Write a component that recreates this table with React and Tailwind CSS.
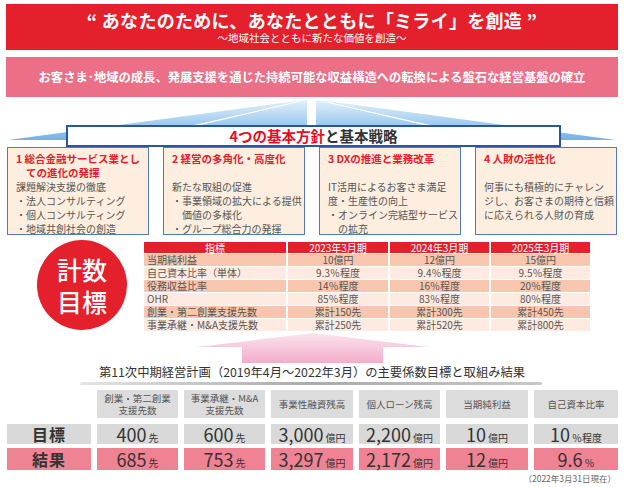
import React from "react";

const FONT = { fontFamily: '"Noto Sans CJK JP", "Noto Sans", sans-serif' };

const POLICIES = [
    {
        title: ["1 総合金融サービス業とし", "ての進化の発揮"],
        body: [
            { t: "課題解決支援の徹底" },
            { t: "・法人コンサルティング" },
            { t: "・個人コンサルティング" },
            { t: "・地域共創社会の創造" },
        ],
    },
    {
        title: ["2 経営の多角化・高度化", ""],
        body: [
            { t: "新たな取組の促進" },
            { t: "・事業領域の拡大による提供" },
            { t: "価値の多様化", indent: true },
            { t: "・グループ総合力の発揮" },
        ],
    },
    {
        title: ["3 DXの推進と業務改革", ""],
        body: [
            { t: "IT活用によるお客さま満足" },
            { t: "度・生産性の向上" },
            { t: "・オンライン完結型サービス" },
            { t: "の拡充", indent: true },
        ],
    },
    {
        title: ["4 人財の活性化", ""],
        body: [
            { t: "何事にも積極的にチャレン" },
            { t: "ジし、お客さまの期待と信頼" },
            { t: "に応えられる人財の育成" },
        ],
    },
];

const TARGETS = [
    ["当期純利益", "10億円", "12億円", "15億円"],
    ["自己資本比率（単体）", "9.3％程度", "9.4％程度", "9.5％程度"],
    ["役務収益比率", "14％程度", "16％程度", "20％程度"],
    ["OHR", "85％程度", "83％程度", "80％程度"],
    ["創業・第二創業支援先数", "累計150先", "累計300先", "累計450先"],
    ["事業承継・M&A支援先数", "累計250先", "累計520先", "累計800先"],
];

const RESULT_HEADERS = [
    ["創業・第二創業", "支援先数"],
    ["事業承継・M&A", "支援先数"],
    ["事業性融資残高"],
    ["個人ローン残高"],
    ["当期純利益"],
    ["自己資本比率"],
];

const GOALS = [
    ["400", "先"],
    ["600", "先"],
    ["3,000", "億円"],
    ["2,200", "億円"],
    ["10", "億円"],
    ["10", "％程度"],
];

const RESULTS = [
    ["685", "先"],
    ["753", "先"],
    ["3,297", "億円"],
    ["2,172", "億円"],
    ["12", "億円"],
    ["9.6", "％"],
];

function Fan() {
    return (
        <svg className="absolute left-0 top-0" width="624" height="50" viewBox="0 0 624 50">
            <defs>
                <linearGradient id="fan" x1="0" y1="3" x2="0" y2="44" gradientUnits="userSpaceOnUse">
                    <stop offset="0" stopColor="#e4f1fb" />
                    <stop offset="1" stopColor="#6fb0e6" />
                </linearGradient>
            </defs>
            <polygon points="304,3 8,43 128,43" fill="url(#fan)" />
            <polygon points="307,3 137,43 307,43" fill="url(#fan)" />
            <polygon points="316,3 316,43 488,43" fill="url(#fan)" />
            <polygon points="319,3 497,43 616,43" fill="url(#fan)" />
        </svg>
    );
}

function Arrow() {
    return (
        <svg className="ml-[197px] block" width="232" height="30" viewBox="0 0 232 30">
            <defs>
                <linearGradient id="arw" x1="0" y1="0" x2="0" y2="30" gradientUnits="userSpaceOnUse">
                    <stop offset="0" stopColor="#fbe4ee" />
                    <stop offset="1" stopColor="#f3adc9" />
                </linearGradient>
            </defs>
            <polygon points="116,0 231,14 186,14 186,30 45,30 45,14 0,14" fill="url(#arw)" />
        </svg>
    );
}

function Value({ n, u }) {
    return (
        <span className="text-[#333]">
            <span className="text-[18px]">{n}</span>
            <span className="text-[10px] ml-[2px]">{u}</span>
        </span>
    );
}

export default function App() {
    return (
        <div className="w-[624px] h-[487px] bg-white overflow-hidden relative" style={FONT}>
            {/* Vision banner */}
            <div className="mx-[6px] mt-[4px] h-[46px] bg-[#e3202c] flex flex-col items-center justify-center text-white">
                <p className="text-[18px] font-bold leading-[22px] tracking-[0.3px]">
                    “ あなたのために、あなたとともに「ミライ」を創造 ”
                </p>
                <p className="text-[10.5px] leading-[14px]">～地域社会とともに新たな価値を創造～</p>
            </div>

            {/* Goal banner */}
            <div className="mx-[6px] mt-[7px] h-[40px] bg-[#ea6f87] flex items-center justify-center">
                <p className="text-white text-[12.3px] font-bold whitespace-nowrap">
                    お客さま･地域の成長、発展支援を通じた持続可能な収益構造への転換による盤石な経営基盤の確立
                </p>
            </div>

            {/* Fan + heading */}
            <div className="relative h-[50px] pt-[28px]">
                <Fan />
                <div className="relative ml-[66px] w-[495px] h-[22px] border-2 border-[#2a55a3] bg-white flex items-center justify-center">
                    <span className="text-[14.5px] font-bold leading-none">
                        <span className="text-[#e60f1f]">4つの基本方針</span>
                        <span className="text-[#333]">と基本戦略</span>
                    </span>
                </div>
            </div>

            {/* Four policies */}
            <div className="grid grid-cols-4 gap-x-[14px] px-[7px] h-[88px]">
                {POLICIES.map((p, i) => (
                    <div key={i} className="bg-[#fdeedf] border border-[#5478ba] pl-[8px] pt-[4px] leading-[14px] whitespace-nowrap overflow-hidden">
                        <div className="text-[10.5px] font-bold text-[#e3202c]">{p.title[0]}</div>
                        <div className="text-[10.5px] font-bold text-[#e3202c] pl-[10px] h-[14px]">{p.title[1]}</div>
                        {p.body.map((b, j) => (
                            <div key={j} className={`text-[10px] text-[#555] ${b.indent ? "pl-[10px]" : ""}`}>
                                {b.t}
                            </div>
                        ))}
                    </div>
                ))}
            </div>

            {/* Numeric targets */}
            <div className="flex h-[98px] pl-[37px]">
                <div className="mt-[5px] w-[90px] h-[90px] rounded-full bg-[#e3202c] flex flex-col items-center justify-center text-white text-[25px] leading-[32px] font-medium">
                    <span>計数</span>
                    <span>目標</span>
                </div>
                <div className="ml-[17px] mt-[7px] w-[444px]">
                    <div className="grid grid-cols-[142px_100px_99px_99px] gap-x-[2px] h-[11px] mb-[1px] bg-white">
                        {["指標", "2023年3月期", "2024年3月期", "2025年3月期"].map((h) => (
                            <div key={h} className="bg-[#e3202c] text-white text-[10px] leading-[11px] text-center">{h}</div>
                        ))}
                    </div>
                    <div className="flex flex-col gap-y-[1px]">
                        {TARGETS.map((r, i) => (
                            <div key={i} className="grid grid-cols-[142px_100px_99px_99px] gap-x-[2px] h-[12px]">
                                {r.map((c, j) => (
                                    <div
                                        key={j}
                                        className={`${i % 2 === 0 ? "bg-[#f8c6ae]" : "bg-[#fdebe1]"} text-[#555] text-[10px] leading-[12px] ${j === 0 ? "pl-[3px]" : "text-center"} whitespace-nowrap`}
                                    >
                                        {c}
                                    </div>
                                ))}
                            </div>
                        ))}
                    </div>
                </div>
            </div>

            <Arrow />

            {/* Results */}
            <p className="h-[19px] text-center text-[12.3px] leading-[19px] text-[#333] whitespace-nowrap">
                第11次中期経営計画（2019年4月～2022年3月）の主要係数目標と取組み結果
            </p>
            <div className="ml-[80px] w-[462px] h-[3px] rounded-full bg-gradient-to-r from-[#e5e5e5] via-[#aaa] to-[#c8c8c8]" />

            <div className="mt-[5px] px-[7px] grid grid-cols-[84px_81px_81px_82px_81px_82px_84px] gap-x-[6px]">
                <div className="h-[28px]" />
                {RESULT_HEADERS.map((h, i) => (
                    <div key={i} className="h-[28px] bg-[#dcdcdc] flex flex-col items-center justify-center text-[9.5px] leading-[12px] text-[#555] whitespace-nowrap">
                        {h.map((l) => <span key={l}>{l}</span>)}
                    </div>
                ))}

                <div className="mt-[6px] h-[20px] bg-[#d9d9d9] flex items-center justify-center text-[16px] font-bold text-[#333] tracking-[1px]">目標</div>
                {GOALS.map(([n, u], i) => (
                    <div key={i} className="mt-[6px] h-[20px] bg-[#d9d9d9] flex items-center justify-center leading-none">
                        <Value n={n} u={u} />
                    </div>
                ))}

                <div className="mt-[4px] h-[22px] bg-[#ef8293] flex items-center justify-center text-[16px] font-bold text-[#333] tracking-[1px]">結果</div>
                {RESULTS.map(([n, u], i) => (
                    <div key={i} className="mt-[4px] h-[22px] bg-[#ef8293] flex items-center justify-center leading-none">
                        <Value n={n} u={u} />
                    </div>
                ))}
            </div>

            <p className="mt-[3px] pr-[8px] text-right text-[8.5px] leading-[11px] text-[#666]">（2022年3月31日現在）</p>
        </div>
    );
}
